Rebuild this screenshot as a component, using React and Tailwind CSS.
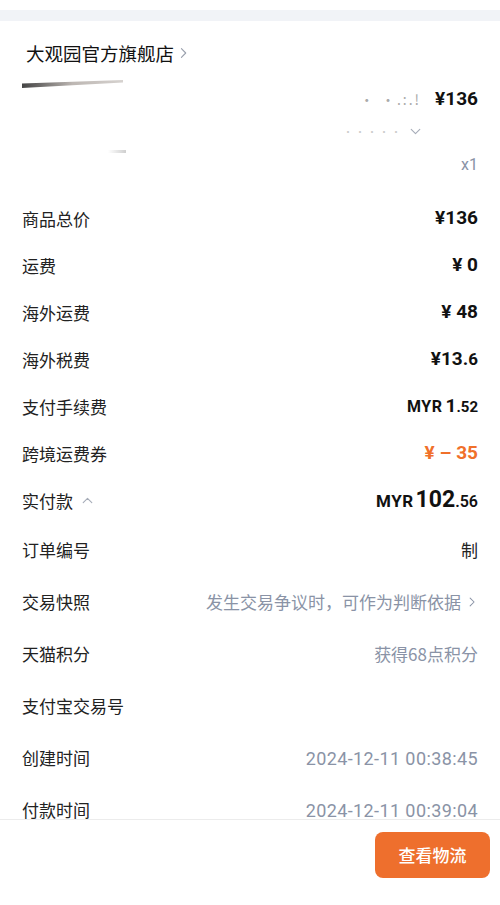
import React from 'react';

const cjk = { fontFamily: '"Noto Sans CJK SC", "Noto Sans", sans-serif' };
const num = { fontFamily: 'Roboto, "Noto Sans CJK SC", sans-serif' };

function Chevron({ dir = 'right', className = '' }) {
  const d = {
    right: 'M4 2 L9 7 L4 12',
    down: 'M2 4 L7 9 L12 4',
    up: 'M2 9 L7 4 L12 9',
  }[dir];
  return (
    <svg viewBox="0 0 14 14" className={className} fill="none" stroke="currentColor" strokeWidth="1.3" strokeLinecap="round" strokeLinejoin="round">
      <path d={d} />
    </svg>
  );
}

function Row({ label, children, tall, labelExtra }) {
  return (
    <div className={`flex items-center justify-between ${tall ? 'h-[52px]' : 'h-[47px]'}`}>
      <div className="flex items-center gap-[8px] text-[17px] text-[#222]" style={cjk}>
        {label}
        {labelExtra}
      </div>
      {children}
    </div>
  );
}

const Gray = ({ children }) => (
  <span className="text-[17px] text-[#8a93a6]" style={cjk}>{children}</span>
);

export default function App() {
  return (
    <div className="relative min-h-[905px] bg-white overflow-hidden" style={cjk}>
      <div className="h-[10px] bg-white" />
      <div className="h-[11px] bg-[#f1f3f7]" />

      <div className="px-[22px]">
        <div className="flex items-center gap-[4px] pt-[19px] h-[45px] pl-[4px]">
          <span className="text-[18.5px] leading-[26px] text-[#111]">大观园官方旗舰店</span>
          <Chevron className="w-[12px] h-[14px] text-[#9aa0ad]" />
        </div>

        <div className="flex h-[129px]">
          <div className="w-[110px] pt-[14px] flex flex-col">
            <div className="h-[8px] w-[101px] bg-gradient-to-r from-[#444] via-[#bdb7b3] to-[#d6d2cf] [clip-path:polygon(0_45%,100%_0,100%_30%,0_100%)]" />
            <div className="mt-[62px] ml-[86px] h-[3px] w-[18px] bg-gradient-to-r from-white to-[#cfcfcf]" />
          </div>
          <div className="flex-1 flex flex-col items-end">
            <div className="flex items-center gap-[14px] h-[24px] mt-[21px]">
              <span className="text-[14px] text-[#aaa] tracking-[2px]">· ·.:.!</span>
              <span className="text-[19px] font-bold text-[#111]" style={num}>¥136</span>
            </div>
            <div className="mr-[56px] mt-[13px] flex items-center gap-[6px]">
              <span className="text-[10px] text-[#ccc] tracking-[2px]">·····</span>
              <Chevron dir="down" className="w-[13px] h-[12px] text-[#a6acb8]" />
            </div>
            <span className="mt-[14px] text-[16px] text-[#8a93a6]" style={num}>x1</span>
          </div>
        </div>

        <Row label="商品总价">
          <span className="text-[19px] font-bold text-[#111]" style={num}>¥136</span>
        </Row>
        <Row label="运费">
          <span className="text-[19px] font-bold text-[#111]" style={num}>¥ 0</span>
        </Row>
        <Row label="海外运费">
          <span className="text-[19px] font-bold text-[#111]" style={num}>¥ 48</span>
        </Row>
        <Row label="海外税费">
          <span className="text-[19px] font-bold text-[#111]" style={num}>¥13.<span className="text-[17px]">6</span></span>
        </Row>
        <Row label="支付手续费">
          <span className="font-bold text-[#111] flex items-baseline" style={num}>
            <span className="text-[16px] mr-[3px] tracking-[0.5px]">MYR</span>
            <span className="text-[19px]">1</span>
            <span className="text-[15px]">.52</span>
          </span>
        </Row>
        <Row label="跨境运费券">
          <span className="text-[19px] font-bold text-[#f0702a]" style={num}>¥ – 35</span>
        </Row>
        <Row label="实付款" labelExtra={<Chevron dir="up" className="w-[13px] h-[12px] text-[#a6acb8]" />}>
          <span className="font-bold text-[#111] flex items-baseline" style={num}>
            <span className="text-[17px] mr-[2px] tracking-[0.5px]">MYR</span>
            <span className="text-[23px]">102</span>
            <span className="text-[16px] font-semibold">.56</span>
          </span>
        </Row>

        <Row label="订单编号" tall>
          <span className="text-[17px] text-[#222]">制</span>
        </Row>
        <Row label="交易快照" tall>
          <span className="flex items-center gap-[6px]">
            <Gray>发生交易争议时，可作为判断依据</Gray>
            <Chevron className="w-[11px] h-[14px] text-[#8a93a6]" />
          </span>
        </Row>
        <Row label="天猫积分" tall>
          <Gray>获得68点积分</Gray>
        </Row>
        <Row label="支付宝交易号" tall>
          <span />
        </Row>
        <Row label="创建时间" tall>
          <span className="text-[18px] text-[#8a93a6] tracking-[0.4px]" style={num}>2024-12-11 00:38:45</span>
        </Row>
        <Row label="付款时间" tall>
          <span className="text-[18px] text-[#8a93a6] tracking-[0.4px]" style={num}>2024-12-11 00:39:04</span>
        </Row>
      </div>

      <div className="absolute left-0 right-0 top-[819px] h-[86px] bg-white border-t border-[#ececec] flex justify-end pt-[12px] pr-[10px]">
        <button className="w-[115px] h-[46px] rounded-[8px] bg-[#ee6f2d] text-white text-[17px] font-medium" style={cjk}>
          查看物流
        </button>
      </div>
    </div>
  );
}
